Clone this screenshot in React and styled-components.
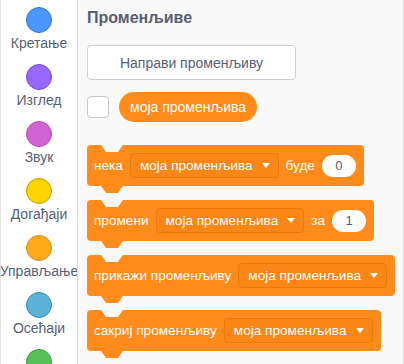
import React from 'react';
import styled, { createGlobalStyle } from 'styled-components';

const GlobalStyle = createGlobalStyle`
  body {
    margin: 0;
    background: #ffffff;
    font-family: "Liberation Sans", Arial, sans-serif;
  }
`

const Frame = styled.div`
  display: flex;
  width: 404px;
  height: 364px;
  overflow: hidden;
`

const Sidebar = styled.div`
  width: 78px;
  box-sizing: border-box;
  flex-shrink: 0;
  display: flex;
  flex-direction: column;
  align-items: center;
  padding-top: 7px;
  background: #ffffff;
  border-left: 1px solid #e3e3e3;
  border-right: 1px solid #dcdcdc;
  overflow: hidden;
`

const Category = styled.div`
  display: flex;
  flex-direction: column;
  align-items: center;
  height: 57px;
  flex-shrink: 0;
`

const Bubble = styled.div`
  width: 26px;
  height: 26px;
  box-sizing: border-box;
  border-radius: 50%;
  background: ${p => p.$fill};
  border: 1px solid ${p => p.$stroke};
`

const Label = styled.div`
  margin-top: 2px;
  font-size: 14px;
  line-height: 16px;
  color: #575e75;
  white-space: nowrap;
`

const Flyout = styled.div`
  flex: 1;
  display: flex;
  flex-direction: column;
  align-items: flex-start;
  padding: 8px 0 0 9px;
  background: #f9f9f9;
  border-right: 1px solid #dddddd;
  overflow: hidden;
`

const Heading = styled.div`
  font-size: 16px;
  line-height: 20px;
  font-weight: bold;
  color: #575e75;
`

const MakeButton = styled.div`
  margin-top: 17px;
  width: 209px;
  height: 35px;
  box-sizing: border-box;
  display: flex;
  align-items: center;
  justify-content: center;
  background: #ffffff;
  border: 1px solid #d0d0d0;
  border-radius: 4px;
  font-size: 14px;
  color: #575e75;
`

const VarRow = styled.div`
  margin-top: 12px;
  display: flex;
  align-items: center;
  gap: 10px;
`

const Checkbox = styled.div`
  width: 22px;
  height: 22px;
  box-sizing: border-box;
  background: #ffffff;
  border: 1px solid #c8c8c8;
  border-radius: 4px;
`

const Reporter = styled.div`
  height: 30px;
  display: flex;
  align-items: center;
  padding: 0 11px;
  border-radius: 15px;
  background: #ff8c1a;
  color: #ffffff;
  font-size: 14px;
`

const Blocks = styled.div`
  margin-top: 23px;
  display: flex;
  flex-direction: column;
  align-items: flex-start;
  gap: 14px;
`

// stack block: notch cut into the top, tab hanging below
const Block = styled.div`
  position: relative;
  height: 41px;
  display: flex;
  align-items: center;
  gap: 7px;
  padding: 0 8px 0 7px;
  background: #ff8c1a;
  border-radius: 4px;
  color: #ffffff;
  font-size: 13.6px;
  white-space: nowrap;

  &::before,
  &::after {
    content: '';
    position: absolute;
    left: 14px;
    width: 22px;
    height: 7px;
    clip-path: polygon(0 0, 100% 0, 77% 100%, 23% 100%);
  }
  &::before {
    top: 0;
    background: #f9f9f9;
  }
  &::after {
    top: 100%;
    background: #ff8c1a;
  }
`

const Dropdown = styled.div`
  height: 25px;
  box-sizing: border-box;
  display: flex;
  align-items: center;
  gap: 9px;
  padding: 0 8px 0 9px;
  background: #fa8616;
  border: 1px solid #e87a0c;
  border-radius: 4px;
`

const Arrow = styled.span`
  width: 0;
  height: 0;
  border-left: 4px solid transparent;
  border-right: 4px solid transparent;
  border-top: 5px solid #ffffff;
`

const Value = styled.div`
  min-width: 34px;
  height: 22px;
  box-sizing: border-box;
  display: flex;
  align-items: center;
  justify-content: center;
  border-radius: 11px;
  background: #ffffff;
  color: #575e75;
  font-size: 13px;
`

const categories = [
  { name: 'Кретање', fill: '#4c97ff', stroke: '#3373cc' },
  { name: 'Изглед', fill: '#9966ff', stroke: '#774dcb' },
  { name: 'Звук', fill: '#cf63cf', stroke: '#bd42bd' },
  { name: 'Догађаји', fill: '#ffd500', stroke: '#cc9900' },
  { name: 'Управљање', fill: '#ffab19', stroke: '#cf8b17' },
  { name: 'Осећаји', fill: '#5cb1d6', stroke: '#2e8eb8' },
  { name: '', fill: '#59c059', stroke: '#389438' },
]

const VarField = () => (
  <Dropdown>
    моја променљива
    <Arrow />
  </Dropdown>
)

const App = () => {
  return (
    <>
      <GlobalStyle />
      <Frame>
        <Sidebar>
          {categories.map(c => (
            <Category key={c.fill}>
              <Bubble $fill={c.fill} $stroke={c.stroke} />
              {c.name && <Label>{c.name}</Label>}
            </Category>
          ))}
        </Sidebar>

        <Flyout>
          <Heading>Променљиве</Heading>
          <MakeButton>Направи променљиву</MakeButton>
          <VarRow>
            <Checkbox />
            <Reporter>моја променљива</Reporter>
          </VarRow>

          <Blocks>
            <Block>
              нека <VarField /> буде <Value>0</Value>
            </Block>
            <Block>
              промени <VarField /> за <Value>1</Value>
            </Block>
            <Block>
              прикажи променљиву <VarField />
            </Block>
            <Block>
              сакриј променљиву <VarField />
            </Block>
          </Blocks>
        </Flyout>
      </Frame>
    </>
  )
}

export default App;
